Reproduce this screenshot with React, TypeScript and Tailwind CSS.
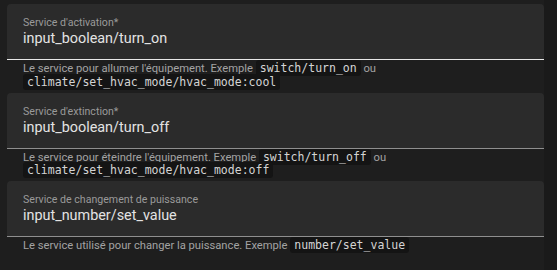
import React from 'react';

type Field = {
  label: string;
  value: string;
  focused?: boolean;
  helper: React.ReactNode;
};

function Code({ children }: { children: React.ReactNode }) {
  return (
    <code className="rounded-[3px] bg-[#141414] px-[4px] py-[1px] font-['DejaVu_Sans_Mono',monospace] text-[11.5px] text-[#d4d4d4]">
      {children}
    </code>
  );
}

const fields: Field[] = [
  {
    label: "Service d'activation*",
    value: 'input_boolean/turn_on',
    focused: true,
    helper: (
      <>
        Le service pour allumer l'équipement. Exemple <Code>switch/turn_on</Code> ou{' '}
        <Code>climate/set_hvac_mode/hvac_mode:cool</Code>
      </>
    ),
  },
  {
    label: "Service d'extinction*",
    value: 'input_boolean/turn_off',
    helper: (
      <>
        Le service pour éteindre l'équipement. Exemple <Code>switch/turn_off</Code> ou{' '}
        <Code>climate/set_hvac_mode/hvac_mode:off</Code>
      </>
    ),
  },
  {
    label: 'Service de changement de puissance',
    value: 'input_number/set_value',
    helper: (
      <>
        Le service utilisé pour changer la puissance. Exemple <Code>number/set_value</Code>
      </>
    ),
  },
];

export default function App() {
  return (
    <div className="flex h-[270px] w-[557px] bg-[#1a1a1a] font-['Roboto',sans-serif]">
      <div className="flex w-[544px] flex-col bg-[#1e1e1e] pl-[7px] pt-[4px]">
        {fields.map((f) => (
          <div key={f.label} className="flex h-[89.5px] flex-col">
            {/* Filled text field */}
            <div
              className={`flex h-[56px] flex-col rounded-t-[4px] bg-[#2b2b2b] px-[16px] pt-[11px] ${
                f.focused ? 'border-b border-[#e8e8e8]' : 'border-b border-[#8f8f8f]'
              }`}
            >
              <span className="text-[10.6px] leading-[15px] text-[#9a9a9a]">{f.label}</span>
              <span className="text-[14.4px] leading-[17px] text-[#e3e3e3]">{f.value}</span>
            </div>
            {/* Helper */}
            <div className="px-[16px] pt-[2px] text-[11.2px] leading-[13.5px] text-[#a3a3a3]">{f.helper}</div>
          </div>
        ))}
      </div>
    </div>
  );
}
